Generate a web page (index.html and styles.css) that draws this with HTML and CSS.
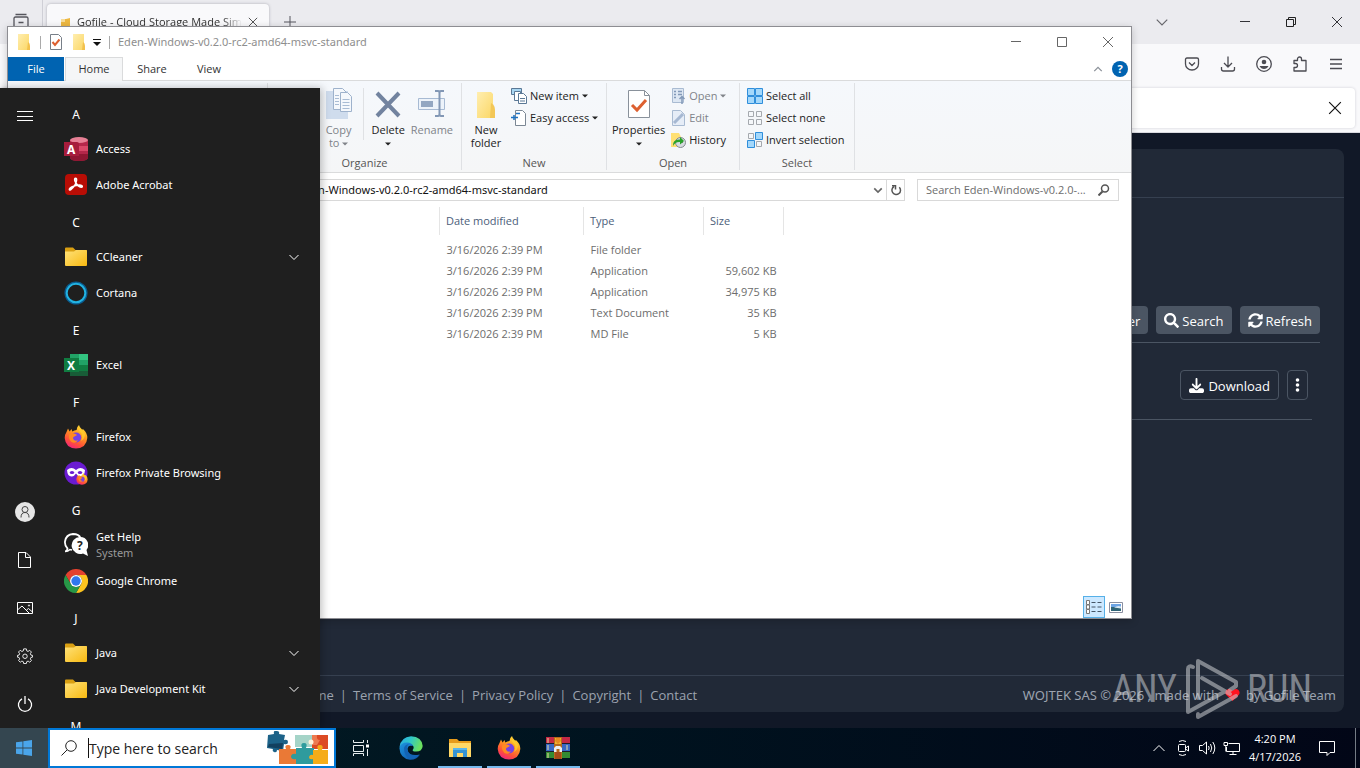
FILE: index.html
```html
<!DOCTYPE html>
<html lang="en">
<head>
<meta charset="utf-8">
<title>Desktop</title>
<link rel="stylesheet" href="styles.css">
</head>
<body>
<svg class="defs" aria-hidden="true">
  <defs>
    <linearGradient id="gold" x1="0" y1="0" x2="1" y2="1"><stop offset="0" stop-color="#ffe27a"/><stop offset="1" stop-color="#f8b910"/></linearGradient>
    <linearGradient id="pale" x1="0" y1="0" x2="1" y2="1"><stop offset="0" stop-color="#ffeeb0"/><stop offset="1" stop-color="#fbd766"/></linearGradient>
    <linearGradient id="flame" x1=".8" y1="0" x2=".3" y2="1"><stop offset="0" stop-color="#ffe63c"/><stop offset=".4" stop-color="#ff9a1f"/><stop offset=".75" stop-color="#ff4f3a"/><stop offset="1" stop-color="#f0257c"/></linearGradient>
    <linearGradient id="edgeA" x1="0" y1="0" x2="1" y2=".3"><stop offset="0" stop-color="#2aa8e8"/><stop offset=".5" stop-color="#2fc8c8"/><stop offset="1" stop-color="#6be060"/></linearGradient>
    <linearGradient id="edgeB" x1="0" y1="0" x2="1" y2="1"><stop offset="0" stop-color="#1e96e0"/><stop offset="1" stop-color="#0c4fa5"/></linearGradient>
    <symbol id="folder" viewBox="0 0 24 24">
      <path d="M1 3.500q0-1 1-1h7l2.500 2.500H22q1 0 1 1V12H1z" fill="#d99f12"/>
      <path d="M1 6.500h9l2-1.500h10q1 0 1 1v14q0 1-1 1H2q-1 0-1-1z" fill="url(#gold)"/>
    </symbol>
    <symbol id="firefox" viewBox="0 0 24 24">
      <path d="M2.500 7 4 3.500l1.600 3L7.500 4l.8 2.600q2-1.400 4.300-1.600Q12.500 2 15 0q.5 2.600 3 4.500l1.200-.3Q23.500 8 23.300 13 22.500 23 12 23.500 1.500 23 .7 13 .7 9.500 2.500 7z" fill="url(#flame)"/>
      <circle cx="12.200" cy="12.500" r="5" fill="#7542e5"/>
      <path d="M5.500 9q3-1.500 5.500-.3l2.200 1.200-2.800 1.500q-2 .6-1.200 2.600 1.500 2.500 4.800 1.200-2.600 4-6.800 1.600Q3.800 13.500 5.500 9z" fill="#ff8a22"/>
      <path d="M14 3q.8 3.500 3.400 5.400 1.600 3.600-.6 7.600 4.400-2 4.200-7-2-4.500-7-6z" fill="#ffd02e" opacity=".7"/>
    </symbol>
    <symbol id="chev" viewBox="0 0 12 12"><path d="M1.500 4 6 8.500 10.500 4" fill="none" stroke="currentColor"/></symbol>
    <symbol id="caret" viewBox="0 0 6 6"><path d="M0 1.500h6l-3 3z" fill="currentColor"/></symbol>
    <symbol id="close" viewBox="0 0 12 12"><path d="M1 1l10 10M11 1 1 11" fill="none" stroke="currentColor"/></symbol>
    <symbol id="minus" viewBox="0 0 12 12"><path d="M1 5.500h10" stroke="currentColor"/></symbol>
  </defs>
</svg>

<div class="desktop">
  <section class="browser" aria-label="Browser">
    <div class="tabbar">
      <button class="tabview" aria-label="Firefox View"><svg width="18" height="18" viewBox="0 0 18 18" fill="none" stroke="#55555c" stroke-width="1.300"><path d="M3.500 1.500h11M2 5.500q0-1.500 1.500-1.500h11Q16 4 16 5.500V14q0 2-2 2H4q-2 0-2-2zM6.500 9.500h5"/></svg></button>
      <div class="tab">
        <svg width="11" height="11" viewBox="0 0 11 11"><path d="M1 2h5l4-1v9H1z" fill="#edb842"/><path d="M1 2h4v3H1z" fill="#f7dc98"/></svg>
        <span class="tab-title">Gofile - Cloud Storage Made Simple</span>
        <button class="tab-close" aria-label="Close tab"><svg width="10" height="10"><use href="#close"/></svg></button>
      </div>
      <button class="tab-add" aria-label="New tab"><svg width="14" height="14" viewBox="0 0 14 14"><path d="M7 1v12M1 7h12" stroke="#55555c"/></svg></button>
      <span class="grow"></span>
      <button class="list-tabs" aria-label="List all tabs"><svg width="14" height="14"><use href="#chev"/></svg></button>
      <button class="winbtn" aria-label="Minimize"><svg width="12" height="12"><use href="#minus"/></svg></button>
      <button class="winbtn" aria-label="Restore"><svg width="12" height="12" viewBox="0 0 12 12" fill="none" stroke="#222"><path d="M1.500 3.500h7v7h-7zM3.500 3.500v-2h7v7h-2"/></svg></button>
      <button class="winbtn" aria-label="Close"><svg width="12" height="12"><use href="#close"/></svg></button>
    </div>
    <div class="toolbar">
      <button aria-label="Pocket"><svg width="16" height="16" viewBox="0 0 16 16"><path d="M3 2h10q1.500 0 1.500 1.500V8a6.500 6 0 0 1-13 0V3.500Q1.500 2 3 2zM5 6.500l3 3 3-3"/></svg></button>
      <button aria-label="Downloads"><svg width="16" height="16" viewBox="0 0 16 16"><path d="M8 .5v10M4 7l4 4 4-4M1.500 11v2q0 2 2 2h9q2 0 2-2v-2"/></svg></button>
      <button aria-label="Account"><svg width="18" height="18" viewBox="0 0 18 18"><circle cx="9" cy="9" r="7.300"/><circle cx="9" cy="7" r="2.300" fill="#4b4b52" stroke="none"/><path d="M4.500 11h9q-1.500 3-4.500 3t-4.500-3z" fill="#4b4b52" stroke="none"/></svg></button>
      <button aria-label="Extensions"><svg width="16" height="16" viewBox="0 0 16 16"><path d="M2 4.500h3.500V3a2 2 0 0 1 4 0v1.500H14V15H2v-3.500h1.500a2 2 0 0 0 0-4H2z"/></svg></button>
      <button aria-label="Menu"><svg width="14" height="14" viewBox="0 0 14 14"><path d="M1 2.500h12M1 7h12M1 11.500h12"/></svg></button>
    </div>
    <div class="notice"><div class="notice-box"><button aria-label="Dismiss"><svg width="14" height="14"><use href="#close"/></svg></button></div></div>
    <div class="page">
      <div class="card">
        <header class="card-head"></header>
        <main class="card-main">
          <div class="actions">
            <button class="solid">Folder</button>
            <button class="solid"><svg width="15" height="15" viewBox="0 0 512 512" fill="#fff"><path d="M505 442.700L405.300 343c-4.500-4.500-10.600-7-17-7H372c27.600-35.300 44-79.700 44-128C416 93.100 322.900 0 208 0S0 93.100 0 208s93.100 208 208 208c48.300 0 92.700-16.400 128-44v16.300c0 6.400 2.500 12.500 7 17l99.700 99.700c9.400 9.400 24.600 9.400 33.900 0l28.300-28.300c9.400-9.400 9.400-24.600.1-34zM208 336c-70.700 0-128-57.200-128-128 0-70.700 57.200-128 128-128 70.700 0 128 57.200 128 128 0 70.700-57.200 128-128 128z"/></svg>Search</button>
            <button class="solid"><svg width="15" height="15" viewBox="0 0 512 512" fill="#fff"><path d="M370.720 133.280C339.458 104.008 298.888 87.962 255.848 88c-77.458.068-144.328 53.178-162.791 126.850-1.344 5.363-6.122 9.150-11.651 9.150H24.103c-7.498 0-13.194-6.807-11.807-14.176C33.933 94.924 134.813 8 256 8c66.448 0 126.791 26.136 171.315 68.685L463.030 40.970C478.149 25.851 504 36.559 504 57.941V192c0 13.255-10.745 24-24 24H345.941c-21.382 0-32.090-25.851-16.971-40.971l41.750-41.749zM32 296h134.059c21.382 0 32.090 25.851 16.971 40.971l-41.750 41.750c31.262 29.273 71.835 45.319 114.876 45.280 77.418-.070 144.315-53.144 162.787-126.849 1.344-5.363 6.122-9.150 11.651-9.150h57.304c7.498 0 13.194 6.807 11.807 14.176C478.067 417.076 377.187 504 256 504c-66.448 0-126.791-26.136-171.315-68.685L48.970 471.030C33.851 486.149 8 475.441 8 454.059V320c0-13.255 10.745-24 24-24z"/></svg>Refresh</button>
          </div>
          <div class="entry">
            <button class="outline"><svg width="15" height="15" viewBox="0 0 512 512" fill="#fff"><path d="M288 32c0-17.700-14.300-32-32-32s-32 14.300-32 32V274.700l-73.400-73.400c-12.500-12.500-32.800-12.500-45.300 0s-12.500 32.800 0 45.300l128 128c12.500 12.500 32.800 12.500 45.300 0l128-128c12.500-12.500 12.500-32.800 0-45.300s-32.800-12.500-45.300 0L288 274.700V32zM64 352c-35.300 0-64 28.700-64 64v32c0 35.300 28.700 64 64 64H448c35.300 0 64-28.700 64-64V416c0-35.300-28.700-64-64-64H346.500l-45.300 45.300c-25 25-65.500 25-90.500 0L165.500 352H64z"/></svg>Download</button>
            <button class="outline" aria-label="More"><svg width="5" height="14" viewBox="0 0 5 14" fill="#fff"><circle cx="2.500" cy="2" r="1.800"/><circle cx="2.500" cy="7" r="1.800"/><circle cx="2.500" cy="12" r="1.800"/></svg></button>
          </div>
        </main>
        <footer class="card-foot">
          <nav class="foot-links"><a href="#">Home</a><span>|</span><a href="#">Terms of Service</a><span>|</span><a href="#">Privacy Policy</a><span>|</span><a href="#">Copyright</a><span>|</span><a href="#">Contact</a></nav>
          <div class="credit"><span>WOJTEK SAS © 2026 , made with</span><svg width="15" height="14" viewBox="0 0 15 14" role="img" aria-label="love"><path d="M7.500 13 1.300 7Q-.6 4.500 1.500 2q2.800-2.300 6 .7 3.200-3 6-.7 2.100 2.500.2 5z" fill="#ff1420"/></svg><span>by Gofile Team</span></div>
        </footer>
      </div>
    </div>
  </section>

  <section class="explorer" aria-label="File Explorer">
    <div class="titlebar">
      <svg width="16" height="18" viewBox="0 0 16 18"><path d="M2 1h11v16H2z" fill="url(#pale)"/><path d="M12 9q2 1 2 4v4h-3z" fill="#f2c14d"/></svg>
      <span class="vbar"></span>
      <button aria-label="Properties"><svg width="14" height="18" viewBox="0 0 14 18"><path d="M1.500 1.500h8l3 3v12h-11z" fill="#fff" stroke="#777f88"/><path d="m3.500 9 2.500 3 4.500-5.500" fill="none" stroke="#dd6030" stroke-width="2"/></svg></button>
      <button aria-label="New folder"><svg width="16" height="18" viewBox="0 0 16 18"><path d="M2 1h11v16H2z" fill="url(#pale)"/><path d="M12 9q2 1 2 4v4h-3z" fill="#f2c14d"/></svg></button>
      <button class="customize" aria-label="Customize toolbar"><svg width="8" height="8" viewBox="0 0 8 8"><path d="M0 1.500h8" stroke="#111"/><path d="M0 4h8L4 8z" fill="#111"/></svg></button>
      <span class="vbar"></span>
      <span class="win-title">Eden-Windows-v0.2.0-rc2-amd64-msvc-standard</span>
      <span class="grow"></span>
      <button class="winbtn" aria-label="Minimize"><svg width="12" height="12"><use href="#minus"/></svg></button>
      <button class="winbtn" aria-label="Maximize"><svg width="12" height="12" viewBox="0 0 12 12"><path d="M1.500 1.500h9v9h-9z" fill="none" stroke="currentColor"/></svg></button>
      <button class="winbtn" aria-label="Close"><svg width="12" height="12"><use href="#close"/></svg></button>
    </div>
    <div class="rtabs">
      <button class="rtab file">File</button><button class="rtab active">Home</button><button class="rtab">Share</button><button class="rtab">View</button>
      <span class="grow"></span>
      <button class="collapse" aria-label="Minimize ribbon"><svg width="10" height="10" viewBox="0 0 12 12"><path d="M1.500 8.500 6 4l4.500 4.500" fill="none" stroke="#8a9098" stroke-width="1.500"/></svg></button>
      <button class="help" aria-label="Help">?</button>
    </div>
    <div class="ribbon">
      <div class="group"></div>
      <div class="group">
        <div class="tools organize">
          <button class="big dim"><svg width="32" height="32" viewBox="0 0 32 32"><path d="M3 3h22v28H3z" fill="#cfdced"/><path d="M10.500.5h9l4 4v17h-13z" fill="#f5f8fc" stroke="#9eb2cc"/><path d="M17.500 4.500h7l4 4v15h-11z" fill="#f5f8fc" stroke="#9eb2cc"/><path d="M12 7.500h4M12 10.500h4M12 13.500h4M12 16.500h4M19.500 11.500h7M19.500 14.500h7M19.500 17.500h7M19.500 20.500h7" stroke="#a9bcd4"/></svg><span>Copy<br>to <svg width="6" height="6"><use href="#caret"/></svg></span></button>
          <span class="tool-sep"></span>
          <button class="big"><svg width="32" height="32" viewBox="0 0 32 32"><path d="m5 5 22 23M27 5 5 28" stroke="#72839f" stroke-width="4"/></svg><span>Delete<br><svg width="6" height="6"><use href="#caret"/></svg></span></button>
          <button class="big dim"><svg width="32" height="32" viewBox="0 0 32 32"><path d="M2.500 10.500h26v11h-26z" fill="#edf3fa" stroke="#a7bad3"/><path d="M5 13h12v6H5z" fill="#93a7c2"/><path d="M19 3h3q1.500 0 1.500 2v21q0 2-1.500 2h-3M28 3h-3q-1.500 0-1.500 2v21q0 2 1.500 2h3" fill="none" stroke="#8297b5" stroke-width="2"/></svg><span>Rename</span></button>
        </div>
        <div class="group-label">Organize</div>
      </div>
      <div class="group">
        <div class="tools">
          <button class="big"><svg width="32" height="32" viewBox="0 0 32 32"><path d="M7 4h14l2 2v24H7z" fill="url(#pale)"/><path d="M21 15q4 2 4 7v8h-5z" fill="#f3c757"/></svg><span>New<br>folder</span></button>
          <div class="stack wide">
            <button class="small"><svg width="16" height="16" viewBox="0 0 16 16" fill="#fff" stroke="#5a7896"><path d="M.5.500h10v6H.5z" fill="#a8d6f2"/><path d="M3.500 3.500h6v9h-6z"/><path d="M7.500 5.500h5l3 3v7h-8zM9 10.500h5M9 13h5"/></svg>New item<svg width="6" height="6"><use href="#caret"/></svg></button>
            <button class="small"><svg width="16" height="16" viewBox="0 0 16 16"><path d="M4.500.5h7l3 3v12h-10z" fill="#fff" stroke="#7b8794"/><path d="M0 7.500h7M5 3.500h4M3 5v5" stroke="#1d72c2" stroke-width="1.500"/></svg>Easy access<svg width="6" height="6"><use href="#caret"/></svg></button>
          </div>
        </div>
        <div class="group-label">New</div>
      </div>
      <div class="group">
        <div class="tools open">
          <button class="big"><svg width="32" height="32" viewBox="0 0 32 32"><path d="M5.500 2.500h16l5 5v22h-21z" fill="#fff" stroke="#89919b"/><path d="M21.500 2.500v5h5" fill="none" stroke="#89919b"/><path d="m9 17 5 5 9-10" fill="none" stroke="#dd6030" stroke-width="3"/></svg><span>Properties<br><svg width="6" height="6"><use href="#caret"/></svg></span></button>
          <div class="stack">
            <button class="small dim"><svg width="16" height="16" viewBox="0 0 16 16"><path d="M2.500.5h11v14h-11z" fill="#dde7f3" stroke="#a9bbd2"/><path d="M4 3.500h2M4 6.500h2M4 9.500h2M8 3.500h4M8 6.500h4M12 16V9M9.500 11 12 8.500l2.500 2.500" stroke="#8299b8" stroke-width="1.500" fill="none"/></svg>Open<svg width="6" height="6"><use href="#caret"/></svg></button>
            <button class="small dim"><svg width="16" height="16" viewBox="0 0 16 16"><path d="M2.500.5h8l4 4v11h-12z" fill="#e6edf7" stroke="#a9bbd2"/><path d="m4 13 9-9" stroke="#a6b8d2" stroke-width="3"/></svg>Edit</button>
            <button class="small"><svg width="16" height="16" viewBox="0 0 16 16"><path d="M1 1h8l2 4v10H1z" fill="#ffe074"/><circle cx="10.500" cy="10.500" r="5" fill="#d7dbe0" stroke="#84898f"/><path d="M10.500 7v4l2.500-1" fill="none" stroke="#555"/><path d="M3 14q-.5-7 7-6.500V5l4 4-4 3.500V10q-4.500-.5-7 4z" fill="#2ba32b"/></svg>History</button>
          </div>
        </div>
        <div class="group-label">Open</div>
      </div>
      <div class="group">
        <div class="tools">
          <div class="stack">
            <button class="small"><svg width="16" height="16" viewBox="0 0 16 16" fill="#a4d8fb" stroke="#2f8edb"><path d="M.5.500h7v7h-7zM8.500.500h7v7h-7zM.5 8.500h7v7h-7zM8.500 8.500h7v7h-7z"/></svg>Select all</button>
            <button class="small"><svg width="16" height="16" viewBox="0 0 16 16" fill="none" stroke="#a5a9ae"><path d="M1.500 1.500h5v5h-5zM9.500 1.500h5v5h-5zM1.500 9.500h5v5h-5zM9.500 9.500h5v5h-5z"/></svg>Select none</button>
            <button class="small"><svg width="16" height="16" viewBox="0 0 16 16"><path d="M1.500 1.500h5v5h-5zM9.500 9.500h5v5h-5z" fill="none" stroke="#a5a9ae"/><path d="M8.500.500h7v7h-7zM.5 8.500h7v7h-7z" fill="#a4d8fb" stroke="#2f8edb"/></svg>Invert selection</button>
          </div>
        </div>
        <div class="group-label">Select</div>
      </div>
    </div>
    <div class="address-row">
      <div class="address">
        <input type="text" aria-label="Address" value="Eden-Windows-v0.2.0-rc2-amd64-msvc-standard">
        <button aria-label="Previous locations"><svg width="10" height="10" viewBox="0 0 12 12"><path d="M1.500 4 6 8.500 10.500 4" fill="none" stroke="#666" stroke-width="2"/></svg></button>
        <button class="reload" aria-label="Refresh"><svg width="12" height="12" viewBox="0 0 12 12" fill="none" stroke="#555" stroke-width="1.500"><path d="M9.300 3.200A4.300 4.300 0 1 1 4 2.500"/><path d="M2 1.800h3.500v3.700"/></svg></button>
      </div>
      <div class="find">
        <input type="text" aria-label="Search folder" placeholder="Search Eden-Windows-v0.2.0-...">
        <svg width="12" height="12" viewBox="0 0 12 12"><circle cx="7" cy="4.500" r="3.500" fill="none" stroke="#555" stroke-width="1.500"/><path d="M4.500 7.500.5 11.500" stroke="#555" stroke-width="2"/></svg>
      </div>
    </div>
    <div class="files">
      <aside class="nav-pane"></aside>
      <table>
        <thead><tr><th class="c-date">Date modified</th><th class="c-type">Type</th><th class="c-size">Size</th></tr></thead>
        <tbody>
          <tr><td>3/16/2026 2:39 PM</td><td>File folder</td><td></td></tr>
          <tr><td>3/16/2026 2:39 PM</td><td>Application</td><td>59,602 KB</td></tr>
          <tr><td>3/16/2026 2:39 PM</td><td>Application</td><td>34,975 KB</td></tr>
          <tr><td>3/16/2026 2:39 PM</td><td>Text Document</td><td>35 KB</td></tr>
          <tr><td>3/16/2026 2:39 PM</td><td>MD File</td><td>5 KB</td></tr>
        </tbody>
      </table>
    </div>
    <div class="status">
      <button class="view on" aria-label="Details view"><svg width="16" height="14" viewBox="0 0 16 14"><path d="M.5.500h3v4h-3zM.5 5h3v4h-3zM.5 9.500h3v4h-3z" fill="#fff" stroke="#777"/><path d="M5.500 2.500h4M11.500 2.500h4M5.500 7h4M11.500 7h4M5.500 11.500h4M11.500 11.500h4" stroke="#456"/></svg></button>
      <button class="view" aria-label="Thumbnail view"><svg width="14" height="11" viewBox="0 0 14 11"><path d="M.5.500h13v10H.5z" fill="#fff" stroke="#8a8fa0"/><path d="M2 2h10v3.500H2z" fill="#6da4e4"/><path d="M2 5h10v4H2z" fill="#2f6476"/><path d="M5 5.500q4-2.500 7-1v2z" fill="#dbe9f4"/></svg></button>
    </div>
  </section>

  <section class="start" aria-label="Start menu">
    <nav class="rail">
      <button aria-label="Expand"><svg width="16" height="16" viewBox="0 0 16 16"><path d="M0 3.500h16M0 8.500h16M0 12.500h16"/></svg></button>
      <span class="grow"></span>
      <button aria-label="Account"><svg width="20" height="20" viewBox="0 0 20 20"><circle cx="10" cy="10" r="10" fill="#e6e6e6" stroke="none"/><circle cx="10" cy="7.500" r="3" stroke="#444"/><path d="M6 15.500q0-5 4-5t4 5" stroke="#444"/></svg></button>
      <button aria-label="Documents"><svg width="16" height="16" viewBox="0 0 16 16"><path d="M1.500.5H9L13.500 5v10.500h-12zM8.500.5v5h5"/></svg></button>
      <button aria-label="Pictures"><svg width="16" height="16" viewBox="0 0 16 16"><path d="M.5 2.500h15v11H.5zM1 9.500 5 6l7 7M9.500 10l2-1.500 4 3.500"/><circle cx="12" cy="5.500" r=".6"/></svg></button>
      <button aria-label="Settings"><svg width="16" height="16" viewBox="0 0 18 18"><path d="m7.500 1-.4 2.200-1.600.7-1.900-1.300-1.900 1.900L3 6.400 2.300 8 .5 8.300v2L2.300 10.600 3 12.200l-1.200 1.900 1.900 1.900 1.800-1.300 1.600.7.400 2.100h3l.4-2.100 1.600-.7 1.800 1.300 1.900-1.900-1.200-1.900.7-1.600 1.800-.3v-2L15.700 8 15 6.400l1.200-1.900-1.900-1.900-1.900 1.300-1.500-.7L10.500 1z"/><circle cx="9" cy="9.300" r="2.500"/></svg></button>
      <button aria-label="Power"><svg width="16" height="16" viewBox="0 0 16 16"><path d="M5 2.800a6.600 6.600 0 1 0 6 0M8 0v8" stroke-width="1.300"/></svg></button>
    </nav>
    <ul class="apps">
      <li class="letter">A</li>
      <li><a href="#"><svg width="24" height="24" viewBox="0 0 24 24"><path d="M6 3v18q1 3 9 3t9-3V3z" fill="#b5274a"/><path d="M6 9v5h18V9z" fill="#d94868"/><path d="M6 17h18v4q-1 3-9 3t-9-3z" fill="#8f1732"/><ellipse cx="15" cy="3" rx="9" ry="3" fill="#e68095"/><path d="M0 5h13q2 0 2 2v12H0z" fill="#a71d3c"/><text x="3" y="16.500" class="glyph">A</text></svg><span>Access</span></a></li>
      <li><a href="#"><svg width="24" height="24" viewBox="0 0 24 24"><rect x="1" y="1" width="22" height="21" rx="4" fill="#b80d05"/><path d="M11 5.500q1.800-.8 1.500 2-.5 5-6 9.300-1.500.7-1-.8 1.500-2.500 6.500-3.500 4.500-.8 6 .3.800 1.200-.8 1.400-3.200-.5-5.200-4Q10 7 11 5.500z" fill="none" stroke="#fff" stroke-width="1.600"/></svg><span>Adobe Acrobat</span></a></li>
      <li class="letter">C</li>
      <li><a href="#"><svg width="24" height="24"><use href="#folder"/></svg><span>CCleaner</span><svg class="more" width="12" height="12"><use href="#chev"/></svg></a></li>
      <li><a href="#"><svg width="24" height="24" viewBox="0 0 24 24" fill="none"><circle cx="12" cy="12" r="10.300" stroke="#0a5d91" stroke-width="2.500"/><circle cx="12" cy="12" r="9.300" stroke="#22b3e2" stroke-width="2"/></svg><span>Cortana</span></a></li>
      <li class="letter">E</li>
      <li><a href="#"><svg width="24" height="24" viewBox="0 0 24 24"><path d="M6 1h18v22H6z" fill="#21a366"/><path d="M15 1h9v6h-9z" fill="#33c481"/><path d="M6 12h9v11H6z" fill="#185c37"/><path d="M15 12h9v6h-9z" fill="#107c41"/><path d="M15 18h9v5h-9z" fill="#185c37"/><path d="M0 5h15v14H0z" fill="#107c41"/><text x="3" y="16.500" class="glyph">X</text></svg><span>Excel</span></a></li>
      <li class="letter">F</li>
      <li><a href="#"><svg width="24" height="24"><use href="#firefox"/></svg><span>Firefox</span></a></li>
      <li><a href="#"><svg width="24" height="24" viewBox="0 0 24 24"><circle cx="12" cy="12" r="11.500" fill="#6a1bd1"/><path d="M3 9q4.500-4 9 0 4.500-4 9 0-.5 7-5 6.500-2.500-.5-4-3-1.500 2.500-4 3Q3.500 16 3 9z" fill="#fff"/><ellipse cx="8" cy="11.500" rx="2.200" ry="1.600" fill="#6a1bd1"/><ellipse cx="16" cy="11.500" rx="2.200" ry="1.600" fill="#6a1bd1"/><svg x="12" y="12" width="12" height="12"><use href="#firefox"/></svg></svg><span>Firefox Private Browsing</span></a></li>
      <li class="letter">G</li>
      <li><a href="#"><svg width="24" height="24" viewBox="0 0 24 24"><path d="M1.500 18.500q2-1 2-3Q.6 13 1 8.500 2 1.500 9 1q6 0 7.500 4" fill="none" stroke="#fff" stroke-width="1.800"/><path d="M1 18.500q3 0 5-2l2 .5" fill="none" stroke="#fff" stroke-width="1.500"/><path d="M16 4a8 8 0 0 1 6.500 13l1.500 6-5-2.500A8.500 8.500 0 1 1 16 4z" fill="#fff"/><text x="13" y="17" class="glyph dark">?</text></svg><span>Get Help<small>System</small></span></a></li>
      <li><a href="#"><svg width="24" height="24" viewBox="0 0 24 24"><path d="M1.600 6A12 12 0 0 1 22.400 6H12a6 6 0 0 0-5.200 9z" fill="#e2412f"/><path d="M22.400 6A12 12 0 0 1 12 24l5.200-9A6 6 0 0 0 12 6z" fill="#fcc31e"/><path d="M1.600 6A12 12 0 0 0 12 24l5.200-9a6 6 0 0 1-10.400 0z" fill="#279847"/><circle cx="12" cy="12" r="6" fill="#fff"/><circle cx="12" cy="12" r="4.700" fill="#2f77ee"/></svg><span>Google Chrome</span></a></li>
      <li class="letter">J</li>
      <li><a href="#"><svg width="24" height="24"><use href="#folder"/></svg><span>Java</span><svg class="more" width="12" height="12"><use href="#chev"/></svg></a></li>
      <li><a href="#"><svg width="24" height="24"><use href="#folder"/></svg><span>Java Development Kit</span><svg class="more" width="12" height="12"><use href="#chev"/></svg></a></li>
      <li class="letter">M</li>
    </ul>
  </section>

  <footer class="taskbar">
    <button class="start-btn" aria-label="Start"><svg width="16" height="16" viewBox="0 0 16 16" fill="#4aa5ea"><path d="M0 2.300 6.500 1.400v6.200H0zM7.300 1.300 16 0v7.600H7.300zM0 8.400h6.500v6.200L0 13.700zM7.300 8.400H16V16l-8.700-1.300z"/></svg></button>
    <div class="tb-search">
      <svg width="16" height="16" viewBox="0 0 16 16" fill="none" stroke="#222"><circle cx="10" cy="6" r="5.300"/><path d="M6.200 9.800.5 15.500"/></svg>
      <input type="text" aria-label="Search Windows" placeholder="Type here to search">
      <svg width="64" height="34" viewBox="0 0 64 34"><path d="m2 4 6-1q-1-4 3-3 3 0 2 3l6 1-1 5q4-1 4 2t-4 2l-1 7-6-1q0 3-3 2-2-1-1-3l-6-1z" fill="#1c6288"/><path d="m3 13 14-1-1 6-14-2z" fill="#12405f"/><path d="M29 4h17v12H29z" fill="#a5d4c8"/><path d="M46 4h16v14H46z" fill="#dc4a24"/><path d="M46 4h5q-1 5 3 5l-3 5h-5z" fill="#ed7a50"/><path d="M13 18h7q-2-4 2-4t2 4h8v15H13z" fill="#ea7936"/><path d="M30 17h6q-2-5 2-5t2 5h8v16H30v-5q-5 1-5-3 1-3 5-2z" fill="#2f9b9d"/><path d="M47 19h5q-2-5 2-5t2 5h6v14H47v-5q-4 1-4-2 1-3 4-2z" fill="#f5ac19"/><circle cx="45" cy="11" r="2.500" fill="#fff1da"/></svg>
    </div>
    <nav class="pinned">
      <button class="task-view" aria-label="Task View"><svg width="16" height="16" viewBox="0 0 16 16" fill="none" stroke="#e8eef0"><path d="M.5 0v2.500h10V0M.5 5.500h10v6H.5zM.5 16v-2.500h10V16M14.500 0v3M14.500 9v7"/><path d="M13 4.500h3v3h-3z" fill="#fff" stroke="none"/></svg></button>
      <button aria-label="Edge"><svg width="24" height="24" viewBox="0 0 24 24"><path d="M.5 11Q2 1 12 .3 23 1 23.700 10q-.5 5.500-6.500 5.500-4 0-3.500-1.500Q16 11 13 8.800 6 5.500.5 11z" fill="url(#edgeA)"/><path d="M.4 12Q1.500 6.500 8 6.500q5 .3 6 3.500-5-1.500-5.500 3 .5 6.500 7 7 3.500 0 5.500-1.500Q17.500 24 11 23.700 1 22.500.4 12z" fill="url(#edgeB)"/><path d="M5 12q1-3.500 5-4-3 2.500-1.500 6.500 2.500 6 12 4-4 4.700-9 4.500Q5 20.500 5 12z" fill="#1363b4"/></svg></button>
      <button class="running" aria-label="File Explorer"><svg width="24" height="24" viewBox="0 0 24 24"><path d="M1 3h8l2 2h12v4H1z" fill="#e79b1a"/><path d="M1 7h22v14H1z" fill="#ffd866"/><path d="M5 12h14v9h-4v-4H9v4H5z" fill="#3594d3"/><path d="M5 12h14v2H5z" fill="#5ab5ea"/></svg></button>
      <button class="running" aria-label="Firefox"><svg width="24" height="24"><use href="#firefox"/></svg></button>
      <button class="running" aria-label="WinRAR"><svg width="24" height="24" viewBox="0 0 24 24"><path d="M0 1h24v7H0z" fill="#c32945"/><path d="M0 8h24v7H0z" fill="#3868c5"/><path d="M0 15h24v7H0z" fill="#348b32"/><path d="M0 7h24v1H0zM0 15h24v1H0z" fill="#1d1d2a"/><path d="M2 2v5M2 9v5M2 17v5M21 9v5" stroke="#eadba2"/><path d="M8 1h8v22H8z" fill="#b7691c"/><path d="M9 2h6v6H9z" fill="#f0b92e"/><path d="M9 16h6v7H9z" fill="#a64b18"/><path d="M8 16v-4l2-2h4l2 2v4h-2.500v-3h-3v3z" fill="#eee"/><path d="M10 2h4l1 3-3 3-3-3z" fill="#e88b20"/></svg></button>
    </nav>
    <span class="grow"></span>
    <div class="tray">
      <button aria-label="Hidden icons"><svg width="14" height="14" viewBox="0 0 14 14"><path d="m1.500 10 5.500-5.500L12.500 10"/></svg></button>
      <button aria-label="Meet now"><svg width="16" height="16" viewBox="0 0 16 16"><rect x="3.500" y="4.500" width="7" height="7" rx="1"/><path d="m10.500 8 3-2v5l-3-2M4 1.500q3.500-2 7 0M4 14.500q3.500 2 7 0"/></svg></button>
      <button aria-label="Volume"><svg width="17" height="16" viewBox="0 0 17 16"><path d="M.5 5.500h3l4-3.500v12l-4-3.500h-3zM9.500 6q1.300 2 0 4M11.500 4q2.500 4 0 8M13.800 2q4 6 0 12"/></svg></button>
      <button aria-label="Network"><svg width="17" height="16" viewBox="0 0 17 16"><path d="M5.500 3.500h11v8H3.500V7M1 2.500h3.500v3H1zM2.800 5.500v6M10 11.500v3M6.500 14.500h7"/></svg></button>
      <div class="clock"><span>4:20 PM</span><span>4/17/2026</span></div>
      <button class="notif" aria-label="Notifications"><svg width="18" height="18" viewBox="0 0 18 18"><path d="M1.500 2.500h15v11H12l-3 3v-3H1.500z"/></svg></button>
      <button class="peek" aria-label="Show desktop"></button>
    </div>
  </footer>

  <div class="watermark"><span>ANY</span><svg width="56" height="62" viewBox="0 0 56 62" fill="none" stroke="currentColor" stroke-width="4" stroke-linejoin="round" stroke-linecap="round"><path d="M18 20 46 36M14 40V3l38 21v4L46 32M9 9Q4 7 4 11v43L40 34M14 56v3L52 38"/></svg><span>RUN</span></div>
</div>
</body>
</html>
```
FILE: styles.css
```css
* { box-sizing: border-box; }
body { margin: 0; font-family: "Open Sans", "Noto Sans", sans-serif; font-size: 11px; line-height: 16px; }
button { border: 0; padding: 0; background: none; font: inherit; color: inherit; display: flex; align-items: center; justify-content: center; }
input { border: 0; padding: 0; background: none; font: inherit; color: inherit; min-width: 0; outline: 0; }
a { color: inherit; text-decoration: none; }
svg { flex: none; }
.defs { position: absolute; width: 0; height: 0; }
.grow { flex: 1; }
.desktop { position: relative; height: 100vh; display: flex; flex-direction: column; overflow: hidden; }

/* Browser window */
.browser { flex: 1; min-height: 0; display: flex; flex-direction: column; background: #f9f9fb; color: #333338; }
.tabbar { height: 44px; flex: none; display: flex; align-items: stretch; background: #ebebef; }
.tabview { width: 43px; border-right: 1px solid #cfcfd6; }
.tab { display: flex; align-items: center; gap: 6px; width: 222px; margin: 4px 0 4px 4px; padding: 0 11px 0 13px; background: #f9f9fb; border-radius: 4px; box-shadow: 0 0 3px #aaaab2; color: #333; }
.tab-title { flex: 1; overflow: hidden; white-space: nowrap; mask-image: linear-gradient(90deg, #000 88%, transparent); }
.tab-add { width: 42px; }
.list-tabs { width: 36px; margin-right: 42px; color: #66666c; }
.winbtn { width: 46px; }
.toolbar { height: 44px; flex: none; display: flex; justify-content: flex-end; align-items: center; padding: 0 6px 4px 0; }
.toolbar button { width: 36px; height: 36px; }
.toolbar svg { fill: none; stroke: #4b4b52; stroke-width: 1.3; stroke-linejoin: round; }
.notice { flex: none; height: 45px; padding-right: 5px; border-bottom: 1px solid #dadae0; }
.notice-box { height: 40px; display: flex; justify-content: flex-end; padding-right: 13px; background: #fff; border-radius: 4px; box-shadow: 0 0 3px #cfcfd6; color: #111; }
.page { flex: 1; min-height: 0; display: flex; padding: 16px 16px 16px 0; background: #111827; font-size: 13px; line-height: 20px; }
.card { flex: 1; display: flex; flex-direction: column; background: #212937; border-radius: 8px; }
.card-head { height: 49px; border-bottom: 1px solid #364050; }
.card-main { flex: 1; padding: 108px 24px 0; }
.actions { display: flex; justify-content: flex-end; gap: 8px; padding-bottom: 8px; border-bottom: 1px solid #4b5563; color: #fff; }
.solid { height: 28px; gap: 3px; padding: 1px 8px 0; background: #4b5563; border-radius: 4px; }
.entry { display: flex; justify-content: flex-end; gap: 8px; margin: 19px 8px 0; padding: 8px 4px 19px; border-bottom: 1px solid #4b5563; color: #fff; }
.outline { height: 30px; gap: 4px; padding: 1px 8px 0; border: 1px solid #4b5563; border-radius: 4px; }
.outline + .outline { padding: 0 7px; }
.card-foot { height: 37px; display: flex; justify-content: space-between; align-items: center; padding: 2px 8px 0 297px; border-top: 1px solid #364050; color: #9ca3af; }
.foot-links, .credit { display: flex; align-items: center; gap: 6px; }
.credit { font-family: "Noto Sans", sans-serif; }

/* File Explorer window */
.explorer { position: absolute; left: 7px; right: 228px; top: 26px; bottom: 149px; display: flex; flex-direction: column; background: #fff; border: 1px solid #8d8d92; color: #333; box-shadow: 0 2px 8px rgba(0, 0, 0, .2); }
.titlebar { height: 30px; flex: none; display: flex; align-items: stretch; padding-left: 8px; gap: 8px; color: #666; }
.titlebar > svg, .vbar { align-self: center; }
.titlebar .winbtn { margin-left: -8px; }
.vbar { width: 1px; height: 13px; background: #aaa; }
.customize { margin-left: -2px; }
.win-title { align-self: center; color: #8e8e8e; font-family: "Noto Sans", sans-serif; }
.rtabs { height: 24px; flex: none; display: flex; border-bottom: 1px solid #dadbdc; }
.rtab { width: 56px; height: 24px; margin-right: 1px; }
.file { background: #0063b1; color: #fff; }
.active { width: 58px; padding-bottom: 1px; background: #f5f6f7; border: 1px solid #dadbdc; border-bottom: 0; }
.collapse { width: 20px; }
.help { width: 16px; height: 16px; align-self: center; margin: 0 3px 0 4px; border-radius: 8px; background: #0063b1; color: #fff; font-weight: 700; }
.ribbon { flex: none; display: grid; grid-template-columns: 260px 194px 145px 133px 115px; height: 92px; background: linear-gradient(#f5f8fc, #f5f6f7); border-bottom: 1px solid #dadbdc; }
.group { display: flex; flex-direction: column; border-right: 1px solid #dfe1e4; margin: 2px 0; }
.tools { flex: 1; min-height: 0; display: flex; padding-left: 5px; }
.tools.open { padding-left: 2px; }
.organize { justify-content: flex-end; padding: 0 5px 0 0; }
.group-label { text-align: center; line-height: 14px; color: #555; }
.big { flex-direction: column; justify-content: flex-start; padding: 5px 3px 0; line-height: 13px; text-align: center; color: #222; }
.big > svg { margin-bottom: 3px; }
.small { height: 22px; gap: 3px; color: #222; white-space: nowrap; }
.big.dim, .small.dim { color: #808389; }
.stack { display: flex; flex-direction: column; align-items: flex-start; padding: 2px 0 0 2px; }
.stack.wide { padding-left: 6px; }
.tool-sep { width: 1px; height: 52px; margin: 5px; background: #dfe1e4; }
.address-row { flex: none; display: flex; gap: 12px; padding: 6px 12px 6px 260px; }
.address, .find { display: flex; align-items: center; height: 22px; border: 1px solid #d9d9d9; }
.address { flex: 1; padding-left: 30px; color: #111; font-family: "Noto Sans", sans-serif; }
.address input { flex: 1; }
.address button { width: 16px; height: 20px; }
.address .reload { width: 18px; border-left: 1px solid #d9d9d9; }
.find { width: 202px; padding: 0 8px; }
.find input { flex: 1; }
.find input::placeholder { color: #6d6d6d; opacity: 1; }
.files { flex: 1; min-height: 0; display: flex; align-items: flex-start; }
.nav-pane { width: 431px; flex: none; }
table { border-collapse: collapse; table-layout: fixed; }
th { height: 28px; padding: 0 6px; text-align: left; font-weight: 400; color: #4c607a; border-left: 1px solid #e5e5e5; }
th:last-child { border-right: 1px solid #e5e5e5; }
.c-date { width: 144px; }
.c-type { width: 120px; }
.c-size { width: 80px; }
td { height: 21px; padding: 0 7px; color: #6d6d6d; }
td:last-child { text-align: right; }
tbody::before { content: ""; display: block; height: 4px; }
.status { flex: none; display: flex; justify-content: flex-end; padding-right: 4px; }
.view { width: 22px; height: 22px; }
.view.on { background: #cce8ff; border: 1px solid #56b0e8; }

/* Start menu */
.start { position: absolute; left: 0; top: 88px; bottom: 40px; width: 320px; display: flex; overflow: hidden; background: #1f1f1f; color: #fff; font-family: "Noto Sans", sans-serif; box-shadow: 2px 0 8px rgba(0, 0, 0, .25); }
.rail { width: 50px; flex: none; display: flex; flex-direction: column; padding-top: 4px; }
.rail button { height: 48px; }
.rail svg { fill: none; stroke: #fff; }
.apps { flex: 1; margin: 0; padding: 7px 20px 0 14px; list-style: none; }
.apps li { height: 36px; }
.apps .letter { width: 24px; line-height: 40px; text-align: center; font-size: 12px; }
.apps a { display: flex; align-items: center; gap: 8px; height: 36px; }
.apps span { flex: 1; }
.apps small { display: block; font-size: 11px; color: #999; }
.glyph { font-size: 12px; font-weight: 700; fill: #fff; }
.glyph.dark { fill: #1f1f1f; }

/* Taskbar */
.taskbar { position: relative; height: 40px; flex: none; display: flex; align-items: stretch; background: linear-gradient(90deg, #031d25, #00131f 45%, #020617); color: #fff; }
.start-btn { width: 48px; background: #344650; }
.tb-search { width: 288px; display: flex; align-items: center; padding: 0 4px 0 11px; background: #fff; border: 2px solid #0078d7; color: #222; }
.tb-search input { flex: 1; height: 20px; margin-left: 11px; border-left: 1px solid #111; font-size: 14px; }
.tb-search input::placeholder { color: #222; opacity: 1; }
.pinned { display: flex; gap: 1px; }
.pinned button { width: 48px; padding-top: 2px; border-bottom: 2px solid transparent; }
.pinned .task-view { width: 50px; }
.pinned .running { border-image: linear-gradient(90deg, transparent 4px, #76b9ed 4px 44px, transparent 44px) 2; }
.tray { display: flex; align-items: stretch; }
.tray button { width: 24px; }
.tray svg { fill: none; stroke: #fff; }
.clock { width: 64px; display: flex; flex-direction: column; justify-content: center; align-items: center; line-height: 18px; }
.tray .notif { width: 40px; }
.tray .peek { width: 5px; margin-left: 8px; border-left: 1px solid #747b85; }

.watermark { position: absolute; right: 48px; bottom: 48px; display: flex; align-items: center; gap: 7px; color: rgba(205, 207, 212, .55); font-family: "Liberation Sans Narrow", "Roboto Condensed", Roboto, sans-serif; font-size: 38px; line-height: 62px; pointer-events: none; }
```
